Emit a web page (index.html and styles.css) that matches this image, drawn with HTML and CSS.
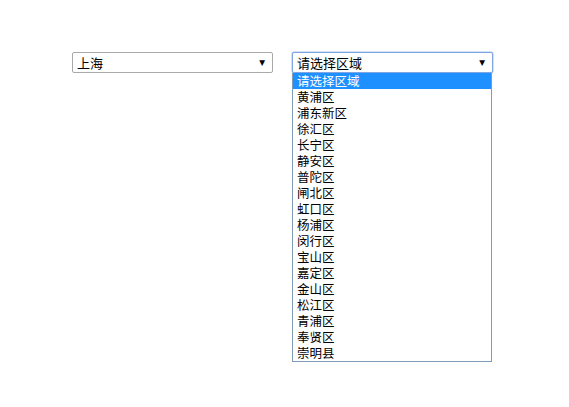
FILE: index.html
```html
<!DOCTYPE html>
<html lang="zh">
<head>
<meta charset="utf-8">
<link rel="stylesheet" href="styles.css">
</head>
<body>
<div class="page">
  <div class="row">
    <div class="select">
      <span class="value">上海</span>
      <span class="arrow">▼</span>
    </div>
    <div class="select-wrap">
      <div class="select focus">
        <span class="value">请选择区域</span>
        <span class="arrow">▼</span>
      </div>
      <ul class="list">
        <li class="active">请选择区域</li>
        <li>黄浦区</li>
        <li>浦东新区</li>
        <li>徐汇区</li>
        <li>长宁区</li>
        <li>静安区</li>
        <li>普陀区</li>
        <li>闸北区</li>
        <li>虹口区</li>
        <li>杨浦区</li>
        <li>闵行区</li>
        <li>宝山区</li>
        <li>嘉定区</li>
        <li>金山区</li>
        <li>松江区</li>
        <li>青浦区</li>
        <li>奉贤区</li>
        <li>崇明县</li>
      </ul>
    </div>
  </div>
  <div class="edge"></div>
</div>
</body>
</html>
```

FILE: styles.css
```css
html, body {
  margin: 0;
  padding: 0;
  background: #fff;
}
body {
  font-family: "Noto Sans CJK SC", "Liberation Sans", sans-serif;
  font-size: 13px;
  color: #000;
}
.page {
  width: 570px;
  height: 407px;
  display: flex;
  box-sizing: border-box;
}
.row {
  flex: 1;
  display: flex;
  gap: 19px;
  padding: 52px 0 0 72px;
  align-items: flex-start;
}
.select-wrap {
  position: relative;
}
.select {
  box-sizing: border-box;
  width: 201px;
  height: 21px;
  border: 1px solid #a9a9a9;
  border-radius: 2px;
  display: flex;
  align-items: center;
  justify-content: space-between;
  padding: 0 7px 0 4px;
  background: #fff;
}
.select.focus {
  border-color: #7fa6e3;
  box-shadow: 0 0 0 0.5px #a9c6f0;
}
.value {
  line-height: 19px;
  font-size: 13px;
}
.arrow {
  font-size: 7.5px;
  line-height: 19px;
  font-family: "DejaVu Sans", sans-serif;
}
.list {
  position: absolute;
  top: 21px;
  left: 0;
  margin: 0;
  padding: 0;
  list-style: none;
  box-sizing: border-box;
  width: 200px;
  border: 1px solid #7f9db9;
  border-top: none;
  background: #fff;
}
.list li {
  height: 16px;
  line-height: 16px;
  padding-left: 4px;
  font-size: 12.5px;
}
.list li.active {
  background: #1e90ff;
  color: #fff;
}
.edge {
  width: 1px;
  height: 407px;
  background: #d4d4d4;
}
```
